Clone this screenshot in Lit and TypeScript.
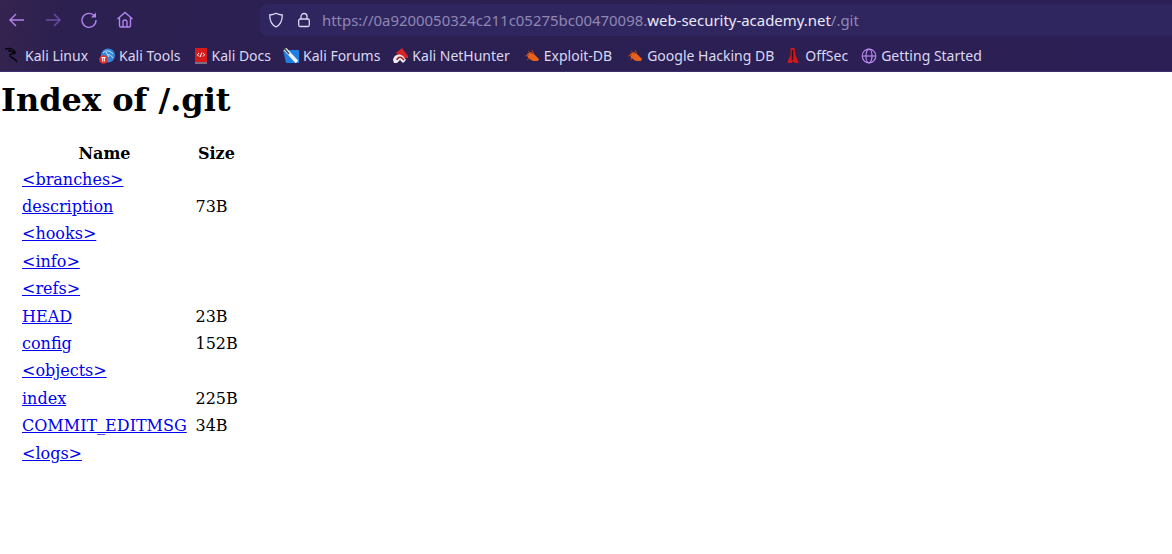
import { LitElement, html, css, svg } from "lit";
import { customElement } from "lit/decorators.js";

const rows: [string, string][] = [
  ["<branches>", ""],
  ["description", "73B"],
  ["<hooks>", ""],
  ["<info>", ""],
  ["<refs>", ""],
  ["HEAD", "23B"],
  ["config", "152B"],
  ["<objects>", ""],
  ["index", "225B"],
  ["COMMIT_EDITMSG", "34B"],
  ["<logs>", ""],
];

const roach = svg`<svg width="16" height="16" viewBox="0 0 16 16"><path d="M3 6l4-2 4 3 4 4-1 2-5 0-5-3z" fill="#e8601c"/><path d="M1 8l4-1M4 3l4 3M8 2l2 4M3 12l3-2" stroke="#a8461c" stroke-width="1" fill="none"/></svg>`;

const marks = [
  { label: "Kali Linux", gap: 0, icon: svg`<svg width="16" height="18" viewBox="0 0 16 18"><path d="M0 2c4-1 8 0 10 3 1 2-4 1-5 3-1 3 5 2 7 7M3 4c2-1 5 1 7 3" stroke="#07060c" stroke-width="1.6" fill="none"/></svg>` },
  { label: "Kali Tools", gap: 11, icon: svg`<svg width="16" height="16" viewBox="0 0 16 16"><circle cx="9" cy="7.500" r="7" fill="#2f88dc"/><path d="M4 5c3-3 6-3 10 1M8 7c2-1 4 0 6 3M7 4l3 5" stroke="#cfe6f8" fill="none"/><circle cx="4.500" cy="11.500" r="4.300" fill="#e4322b"/><path d="M2.500 9.500h4M3.700 9.500v4M5.300 9.500v4" stroke="#fff"/></svg>` },
  { label: "Kali Docs", gap: 13, icon: svg`<svg width="14" height="17" viewBox="0 0 14 17"><path d="M1 1h12v14H1z" fill="#d81a1a"/><path d="M1 16h12" stroke="#c8b8b8"/><path d="M5 6L3.400 7.800 5 9.500M9 6l1.600 1.800L9 9.500M7.800 5.500L6.200 10" stroke="#fff" fill="none"/></svg>` },
  { label: "Kali Forums", gap: 12, icon: svg`<svg width="16" height="16" viewBox="0 0 16 16"><path d="M0 2h16v13H3z" fill="#1f7fe0"/><path d="M2 1l12 13" stroke="#eef2f6" stroke-width="3.500"/><path d="M1 0l5 6" stroke="#4a4650" stroke-width="1.500"/></svg>` },
  { label: "Kali NetHunter", gap: 12, icon: svg`<svg width="16" height="16" viewBox="0 0 16 16"><path d="M4 5l6-5 6 8v2H9z" fill="#d8232a"/><path d="M1 12a6 6 0 0 1 10-4l3 4-3 3-3-3-3 3H2z" fill="#ecebee"/><path d="M5 12a3 3 0 0 1 5-2l2 2" stroke="#a81e26" stroke-width="1.600" fill="none"/></svg>` },
  { label: "Exploit-DB", gap: 14, icon: roach },
  { label: "Google Hacking DB", gap: 15, icon: roach },
  { label: "OffSec", gap: 11, icon: svg`<svg width="16" height="17" viewBox="0 0 16 17"><path d="M5.500 1h4l1 7 3 7v1h-4L8 14l-1.500 2h-4v-1l3-7z" fill="#d0181c"/><path d="M7.500 3v10" stroke="#3a0d12" stroke-width="1.500"/></svg>` },
  { label: "Getting Started", gap: 13, icon: svg`<svg width="16" height="16" viewBox="0 0 16 16" fill="none" stroke="#b689ee" stroke-width="1.200"><circle cx="8" cy="8" r="6.800"/><ellipse cx="8" cy="8" rx="3" ry="6.800"/><path d="M1.200 8h13.600"/></svg>` },
];

@customElement("app-root")
export class AppRoot extends LitElement {
  static styles = css`
    :host { display: block; background: #fff; height: 554px; overflow: hidden; font-family: "DejaVu Serif", serif; color: #000; }
    .chrome { height: 72px; box-sizing: border-box; background: linear-gradient(100deg, #36234f 0, #2b2050 70px, #2b1f55 100%); border-bottom: 1px solid #3c2f70; font-family: "Noto Sans", sans-serif; }
    .nav { height: 40px; display: flex; align-items: center; }
    .navbtns { display: flex; align-items: center; width: 260px; padding-left: 8px; box-sizing: border-box; gap: 18px; }
    .navbtns svg { display: block; }
    .url { width: 912px; height: 32px; display: flex; align-items: center; background: #2f2660; border-radius: 6px 0 0 6px; padding-left: 8px; box-sizing: border-box; font-size: 14.95px; color: #8f87b2; white-space: nowrap; }
    .url svg { flex: none; display: block; }
    .shield { margin-right: 12px; }
    .lock { margin-right: 10px; }
    .url b { font-weight: 400; color: #ece9f8; }
    .marks { height: 31px; display: flex; align-items: center; padding-left: 5px; font-size: 14px; color: #dcd8f2; white-space: nowrap; }
    .mark { display: flex; align-items: center; gap: 4px; }
    .mark svg { display: block; flex: none; }
    h1 { font-size: 32px; font-weight: 700; line-height: 38px; margin: 9px 0 0 1px; }
    table { border-collapse: collapse; margin: 21.5px 0 0 18px; font-size: 16px; }
    th { font-weight: 700; height: 25px; padding: 0 4px; text-align: center; }
    td { height: 27.4px; padding: 0 4px; }
    td:first-child { min-width: 165px; }
    td + td { padding-left: 4.5px; }
    a { color: #0000ee; text-decoration: underline; }
  `;

  render() {
    return html`
      <div class="chrome">
        <div class="nav">
          <div class="navbtns">
            <svg width="18" height="18" viewBox="0 0 18 18" fill="none" stroke="#b184ee" stroke-width="1.400"><path d="M16 9H2M8 3L2 9l6 6"/></svg>
            <svg width="18" height="18" viewBox="0 0 18 18" fill="none" stroke="#6a4da8" stroke-width="1.400"><path d="M2 9h14M10 3l6 6-6 6"/></svg>
            <svg width="18" height="18" viewBox="0 0 18 18" fill="none" stroke="#b184ee" stroke-width="1.400"><path d="M14.500 5A7 7 0 1 0 16 9"/><path d="M16 1.500v5h-5z" fill="#b184ee" stroke="none"/></svg>
            <svg width="18" height="18" viewBox="0 0 18 18" fill="none" stroke="#b184ee" stroke-width="1.400"><path d="M1.500 8L9 1.500 16.500 8M3.500 7v7.500a1.500 1.500 0 0 0 1.500 1.500h8a1.500 1.500 0 0 0 1.500-1.500V7M7 16v-5a2 2 0 0 1 4 0v5"/></svg>
          </div>
          <div class="url">
            <svg class="shield" width="16" height="16" viewBox="0 0 16 16" fill="none" stroke="#dcd8f2" stroke-width="1.300"><path d="M8 1.200c2 1.200 4 1.600 6.300 1.800 0 5-1 9.500-6.300 11.800C2.700 12.500 1.700 8 1.700 3 4 2.800 6 2.400 8 1.200z"/></svg>
            <svg class="lock" width="16" height="16" viewBox="0 0 16 16" fill="none" stroke="#dcd8f2" stroke-width="1.300"><rect x="2.700" y="7" width="10.600" height="7.500" rx="1.500"/><path d="M5 7V4.500a3 3 0 0 1 6 0V7"/></svg>
            <span>https://0a9200050324c211c05275bc00470098.<b>web-security-academy.net</b>/.git</span>
          </div>
        </div>
        <div class="marks">
          ${marks.map((m) => html`<div class="mark" style="margin-left:${m.gap}px">${m.icon}<span>${m.label}</span></div>`)}
        </div>
      </div>
      <h1>Index of /.git</h1>
      <table>
        <thead><tr><th>Name</th><th>Size</th></tr></thead>
        <tbody>
          ${rows.map(([n, s]) => html`<tr><td><a href="#">${n}</a></td><td>${s}</td></tr>`)}
        </tbody>
      </table>
    `;
  }
}
